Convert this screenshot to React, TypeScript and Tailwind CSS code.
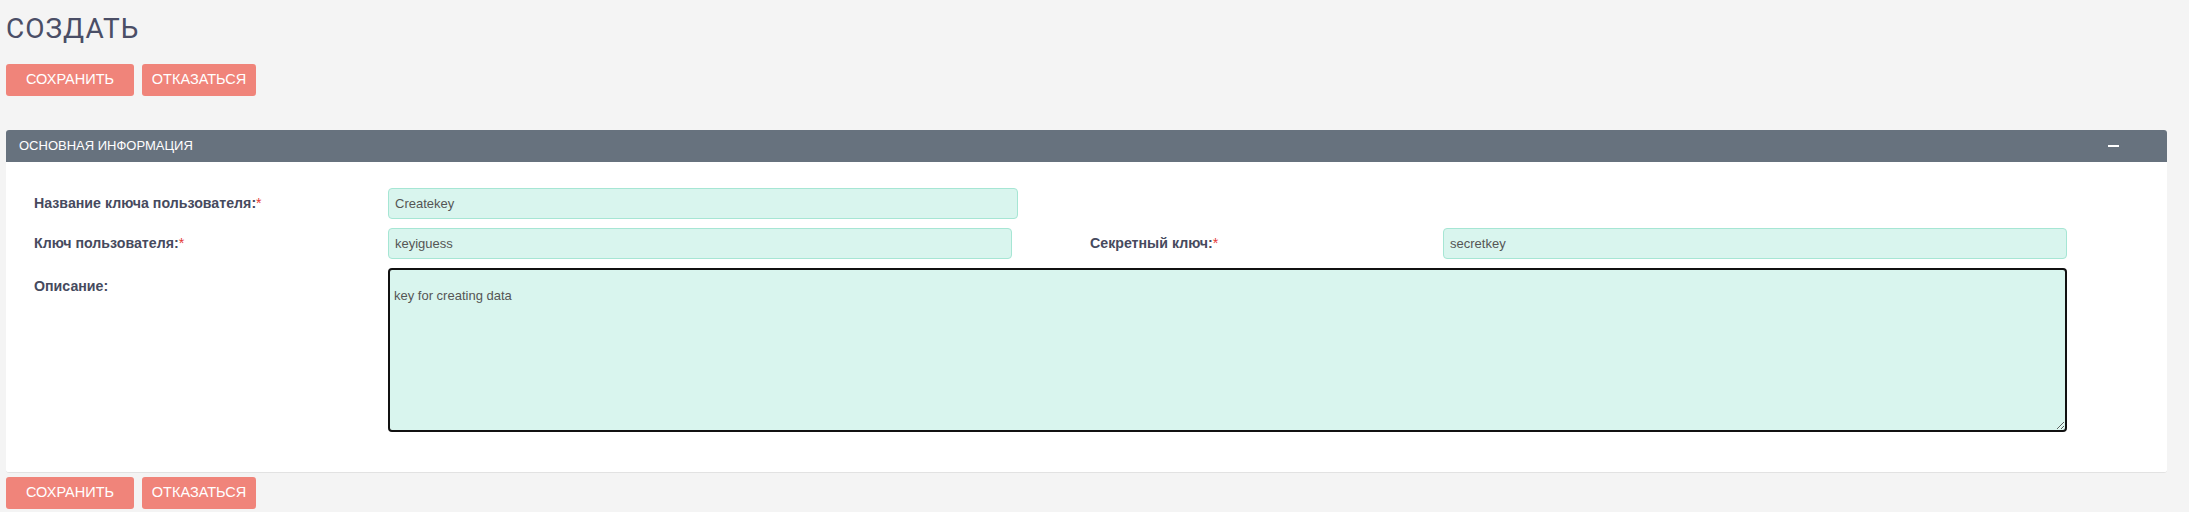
import React from "react";

const font = { fontFamily: "'Liberation Sans', Arial, sans-serif" };

function ActionButtons() {
  return (
    <div className="flex gap-2">
      <button
        type="button"
        className="h-[32px] w-[128px] rounded-[3px] bg-[#f0847a] text-[14.5px] text-white"
      >
        СОХРАНИТЬ
      </button>
      <button
        type="button"
        className="h-[32px] w-[114px] rounded-[3px] bg-[#f0847a] text-[14.5px] text-white"
      >
        ОТКАЗАТЬСЯ
      </button>
    </div>
  );
}

function Label({ text, required, className = "" }: { text: string; required?: boolean; className?: string }) {
  return (
    <div className={"shrink-0 text-[14.2px] font-bold text-[#464a5e] " + className}>
      {text}
      {required && <span className="font-normal text-[#e53935]">*</span>}
    </div>
  );
}

function Field({ value, className = "" }: { value: string; className?: string }) {
  return (
    <input
      readOnly
      value={value}
      className={
        "h-[31px] shrink-0 rounded-[4px] border border-[#a6e6d4] bg-[#d9f5ee] px-[6px] text-[13px] text-[#555] outline-none " +
        className
      }
    />
  );
}

export default function App() {
  return (
    <div className="min-h-[512px] bg-[#f4f4f4] pl-[6px] pr-[22px]" style={font}>
      <h1
        className="pt-[13px] text-[28px] font-normal leading-[32px] tracking-[1px] text-[#4a4e66]"
        style={{ fontFamily: "Roboto, 'Liberation Sans', sans-serif" }}
      >
        СОЗДАТЬ
      </h1>
      <div className="mt-[19px]">
        <ActionButtons />
      </div>

      <div className="mt-[34px] rounded-[3px] border-b border-[#e2e2e2] bg-white">
        <div className="flex h-[32px] items-center justify-between rounded-t-[3px] bg-[#67727e] pl-[13px] pr-[48px]">
          <span className="text-[13px] text-white">ОСНОВНАЯ ИНФОРМАЦИЯ</span>
          <span className="h-[2px] w-[11px] bg-white" />
        </div>
        <div className="flex flex-col gap-[9px] pb-[40px] pl-[28px] pt-[26px]">
          <div className="flex items-center">
            <Label text="Название ключа пользователя:" required className="w-[354px]" />
            <Field value="Createkey" className="w-[630px]" />
          </div>
          <div className="flex items-center">
            <Label text="Ключ пользователя:" required className="w-[354px]" />
            <Field value="keyiguess" className="w-[624px]" />
            <Label text="Секретный ключ:" required className="ml-[78px] w-[353px]" />
            <Field value="secretkey" className="w-[624px]" />
          </div>
          <div className="flex items-start">
            <Label text="Описание:" className="w-[354px] pt-[8px]" />
            <textarea
              readOnly
              value="key for creating data"
              className="h-[164px] w-[1679px] shrink-0 rounded-[4px] border-2 border-[#111] bg-[#d9f5ee] px-[4px] pb-[10px] pt-[16px] text-[13px] text-[#555] outline-none"
            />
          </div>
        </div>
      </div>

      <div className="mt-[4px]">
        <ActionButtons />
      </div>
    </div>
  );
}
